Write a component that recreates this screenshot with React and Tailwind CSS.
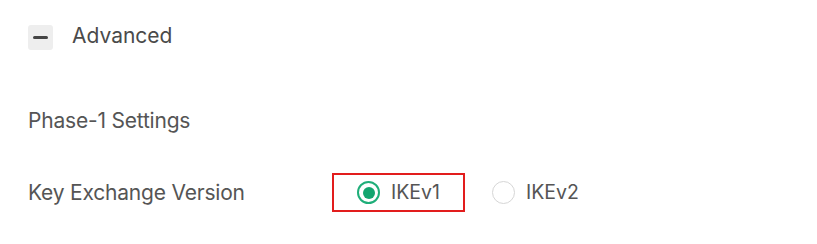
import React, { useState } from "react";

const Radio = ({ checked, label, onClick }) => (
  <button
    type="button"
    onClick={onClick}
    className="flex items-center gap-[11px] cursor-pointer"
  >
    <span
      className={
        checked
          ? "flex items-center justify-center w-[23px] h-[23px] rounded-full border-2 border-[#1fae79]"
          : "flex items-center justify-center w-[23px] h-[23px] rounded-full border-[1.5px] border-[#d6d6d6]"
      }
    >
      {checked && <span className="w-[12px] h-[12px] rounded-full bg-[#13a56f]" />}
    </span>
    <span className="text-[19.5px] text-[#555555]">{label}</span>
  </button>
);

const App = () => {
  const [open, setOpen] = useState(true);
  const [version, setVersion] = useState("IKEv1");

  return (
    <div
      className="w-[817px] h-[244px] bg-white pl-[28px] pt-[25px]"
      style={{ fontFamily: "Inter, 'Noto Sans', sans-serif" }}
    >
      <div className="flex items-center gap-[19px] h-[25px]">
        <button
          type="button"
          onClick={() => setOpen(!open)}
          className="flex items-center justify-center w-[25px] h-[25px] rounded-[3px] bg-[#eeeeee]"
        >
          <span className="w-[15px] h-[3px] rounded-full bg-[#444444]" />
        </button>
        <span className="text-[21px] leading-[28px] -mt-[3px] text-[#4a4a4a]">Advanced</span>
      </div>

      {open && (
        <>
          <div className="mt-[57px] text-[21px] leading-[28px] text-[#555555] tracking-[-0.2px]">
            Phase-1 Settings
          </div>

          <div className="flex items-center mt-[38px]">
            <div className="w-[304px] text-[21px] leading-[28px] text-[#555555] tracking-[-0.2px]">
              Key Exchange Version
            </div>
            <div className="flex items-center h-[39px] px-[23px] border-2 border-[#e21d1d]">
              <Radio
                checked={version === "IKEv1"}
                label="IKEv1"
                onClick={() => setVersion("IKEv1")}
              />
            </div>
            <div className="ml-[27px]">
              <Radio
                checked={version === "IKEv2"}
                label="IKEv2"
                onClick={() => setVersion("IKEv2")}
              />
            </div>
          </div>
        </>
      )}
    </div>
  );
};

export default App;
